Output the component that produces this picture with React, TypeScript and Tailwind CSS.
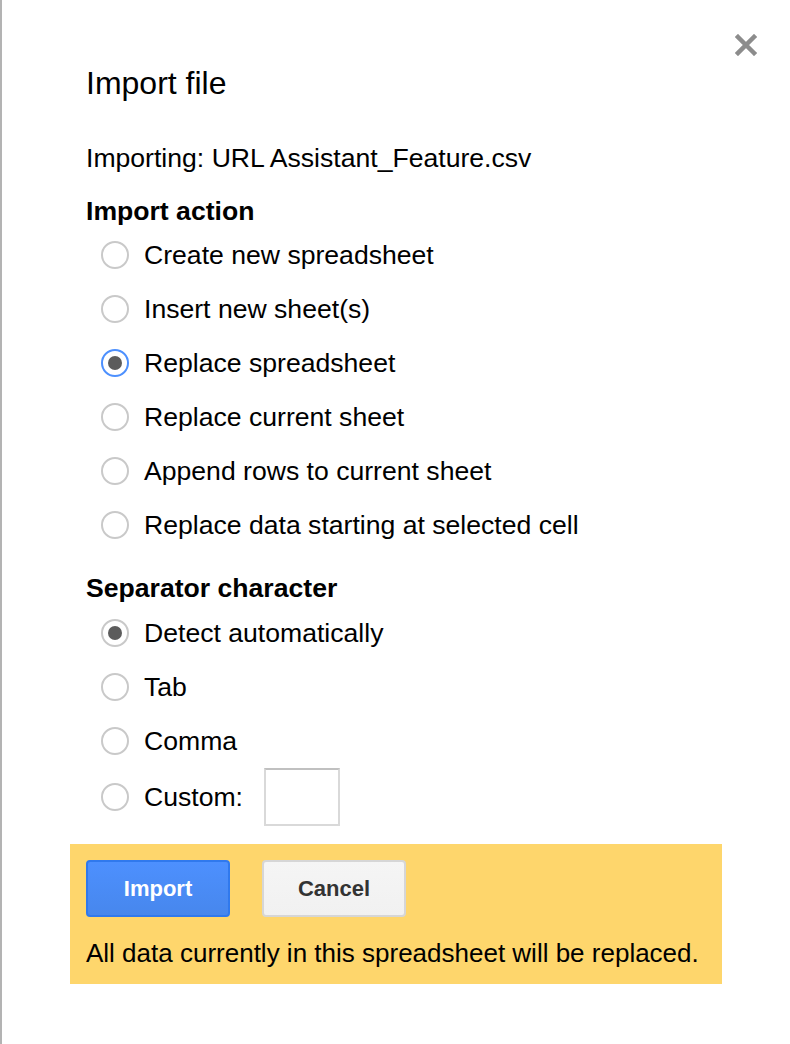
import { useState } from "react"

const actions = [
  "Create new spreadsheet",
  "Insert new sheet(s)",
  "Replace spreadsheet",
  "Replace current sheet",
  "Append rows to current sheet",
  "Replace data starting at selected cell",
]

const separators = ["Detect automatically", "Tab", "Comma"]

function Radio({ checked, focused }: { checked: boolean; focused?: boolean }) {
  return (
    <span
      className={`flex size-[28px] shrink-0 items-center justify-center rounded-full border-2 bg-white ${
        focused ? "border-[#4d90fe]" : "border-[#c9c9c9]"
      }`}
    >
      {checked && <span className="size-[14px] rounded-full bg-[#5c5c5c]" />}
    </span>
  )
}

function RadioRow({
  label,
  checked,
  focused,
  onClick,
}: {
  label: string
  checked: boolean
  focused?: boolean
  onClick: () => void
}) {
  return (
    <div className="flex h-[54px] cursor-pointer items-center gap-[15px] pl-[15px]" onClick={onClick}>
      <Radio checked={checked} focused={focused} />
      <span className="leading-[30px]">{label}</span>
    </div>
  )
}

export default function App() {
  const [action, setAction] = useState(2)
  const [sep, setSep] = useState(0)

  return (
    <div className="min-h-[1044px] border-l-2 border-[#b3b3b3] bg-white font-['Liberation_Sans',Arial,sans-serif] text-[26px] text-black">
      <div className="relative pl-[84px] pt-[65px] text-[26.6px]">
        <button className="absolute right-[33px] top-[34px] size-[22px] text-[#8c8c8c]">
          <svg viewBox="0 0 22 22" className="size-[22px]">
            <path d="M3 3 L19 19 M19 3 L3 19" stroke="currentColor" strokeWidth="4.5" strokeLinecap="square" />
          </svg>
        </button>

        <h1 className="text-[32px] leading-[36px]">Import file</h1>

        <p className="mt-[42px] leading-[30px]">Importing: URL Assistant_Feature.csv</p>

        <h2 className="mt-[23px] font-bold leading-[30px]">Import action</h2>
        <div className="mt-[2px]">
          {actions.map((a, i) => (
            <RadioRow key={a} label={a} checked={action === i} focused={action === i} onClick={() => setAction(i)} />
          ))}
        </div>

        <h2 className="mb-[3px] mt-[21px] font-bold leading-[30px]">Separator character</h2>
        <div>
          {separators.map((s, i) => (
            <RadioRow key={s} label={s} checked={sep === i} onClick={() => setSep(i)} />
          ))}
          <div className="flex h-[58px] items-center gap-[15px] pl-[15px]" onClick={() => setSep(3)}>
            <Radio checked={sep === 3} />
            <span className="leading-[30px]">Custom:</span>
            <input
              className="ml-[6px] h-[58px] w-[76px] border-2 border-[#d9d9d9] border-t-[#c0c0c0] outline-none"
              type="text"
            />
          </div>
        </div>
      </div>

      <div className="ml-[68px] mt-[18px] w-[652px] bg-[#fed66c] px-[16px] pb-[16px] pt-[16px]">
        <div className="flex gap-[32px]">
          <button className="h-[57px] w-[144px] rounded-[4px] border-2 border-[#3079ed] bg-gradient-to-b from-[#4d90fe] to-[#4787ed] text-[22px] font-bold text-white">
            Import
          </button>
          <button className="h-[57px] w-[144px] rounded-[4px] border-2 border-[#d6d6d6] bg-gradient-to-b from-[#f5f5f5] to-[#f1f1f1] text-[22px] font-bold text-[#333]">
            Cancel
          </button>
        </div>
        <p className="mt-[21px] leading-[30px]">All data currently in this spreadsheet will be replaced.</p>
      </div>
    </div>
  )
}
